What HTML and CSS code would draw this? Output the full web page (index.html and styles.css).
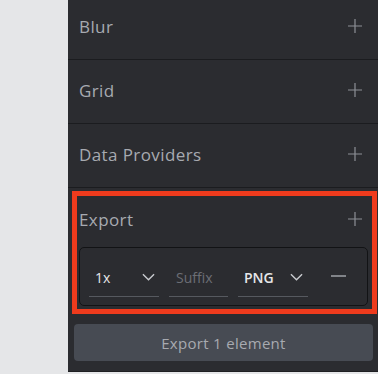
FILE: index.html
```html
<!DOCTYPE html>
<html lang="en">
<head>
  <meta charset="UTF-8">
  <title>Design panel</title>
  <link rel="stylesheet" href="styles.css">
</head>
<body>
  <div class="workspace">
    <div class="canvas"></div>
    <div class="panel">
      <div class="section">
        <span class="section-title">Blur</span>
        <svg class="icon" viewBox="0 0 14 14"><path d="M7 0v14M0 7h14"/></svg>
      </div>
      <div class="section">
        <span class="section-title">Grid</span>
        <svg class="icon" viewBox="0 0 14 14"><path d="M7 0v14M0 7h14"/></svg>
      </div>
      <div class="section">
        <span class="section-title">Data Providers</span>
        <svg class="icon" viewBox="0 0 14 14"><path d="M7 0v14M0 7h14"/></svg>
      </div>
      <div class="export">
        <div class="highlight"></div>
        <div class="export-header">
          <span class="section-title">Export</span>
          <svg class="icon" viewBox="0 0 14 14"><path d="M7 0v14M0 7h14"/></svg>
        </div>
        <div class="export-row">
          <div class="field field-scale">
            <span class="value">1x</span>
            <svg class="chevron" viewBox="0 0 14 8"><path d="M1 1l6 6 6-6"/></svg>
          </div>
          <div class="field field-suffix">
            <span class="placeholder">Suffix</span>
          </div>
          <div class="field field-type">
            <span class="value">PNG</span>
            <svg class="chevron" viewBox="0 0 14 8"><path d="M1 1l6 6 6-6"/></svg>
          </div>
          <svg class="minus" viewBox="0 0 16 2"><path d="M0 1h16"/></svg>
        </div>
        <div class="export-button">Export 1 element</div>
      </div>
    </div>
  </div>
</body>
</html>
```

FILE: styles.css
```css
html, body {
  margin: 0;
  height: 100%;
  overflow: hidden;
}
body {
  font-family: 'Open Sans', 'Liberation Sans', sans-serif;
  background: #e5e6e8;
}
.workspace {
  display: flex;
  height: 374px;
}
.canvas {
  width: 68px;
  background: #e5e6e8;
}
.panel {
  flex: 1;
  background: #2b2c30;
  margin-top: -4px;
  border-bottom: 1px solid #1e1f22;
  height: 376px;
  box-sizing: border-box;
}
.section {
  height: 63px;
  box-sizing: border-box;
  border-bottom: 1px solid #1b1c1f;
  display: flex;
  align-items: center;
  justify-content: space-between;
  padding: 0 16px 3px 11px;
}
.section {
  height: 64px;
}
.section-title {
  color: #a7aab0;
  font-size: 17px;
  letter-spacing: 0.4px;
}
.icon {
  width: 14px;
  height: 14px;
  stroke: #8d9096;
  stroke-width: 1.2;
  fill: none;
}
.export {
  position: relative;
}
.highlight {
  position: absolute;
  left: 4px;
  right: 1px;
  top: 3px;
  height: 113px;
  border: 5px solid #ef3b1d;
  pointer-events: none;
}
.export-header {
  height: 59px;
  display: flex;
  align-items: center;
  justify-content: space-between;
  padding: 3px 16px 0 11px;
  box-sizing: border-box;
}
.export-row {
  margin: 0 10px 0 11px;
  height: 59px;
  box-sizing: border-box;
  border: 1px solid #121315;
  border-radius: 5px;
  display: flex;
  align-items: center;
  padding: 0 0 0 9px;
}
.field {
  height: 34px;
  margin-top: 6px;
  padding-bottom: 4px;
  border-bottom: 1px solid #56595f;
  display: flex;
  align-items: center;
  justify-content: space-between;
  box-sizing: border-box;
  font-size: 14px;
}
.field-scale {
  width: 70px;
  padding-left: 6px;
  padding-right: 4px;
}
.field-suffix {
  width: 59px;
  margin-left: 10px;
  padding-left: 7px;
}
.field-type {
  width: 70px;
  margin-left: 10px;
  padding-left: 6px;
  padding-right: 5px;
}
.value {
  color: #e6e7e9;
  font-weight: 600;
}
.field-scale .value {
  font-weight: 400;
}
.placeholder {
  color: #6b6e75;
}
.chevron {
  width: 13px;
  height: 8px;
  stroke: #c9cbcf;
  stroke-width: 1.5;
  fill: none;
}
.minus {
  width: 15px;
  height: 2px;
  margin-left: 23px;
  margin-top: -2px;
  stroke: #a7aab0;
  stroke-width: 1.5;
}
.export-button {
  margin: 18px 5px 0 6px;
  height: 37px;
  border-radius: 4px;
  background: #474b53;
  color: #a7aab0;
  font-size: 15px;
  letter-spacing: 0.3px;
  display: flex;
  align-items: center;
  justify-content: center;
}
```
